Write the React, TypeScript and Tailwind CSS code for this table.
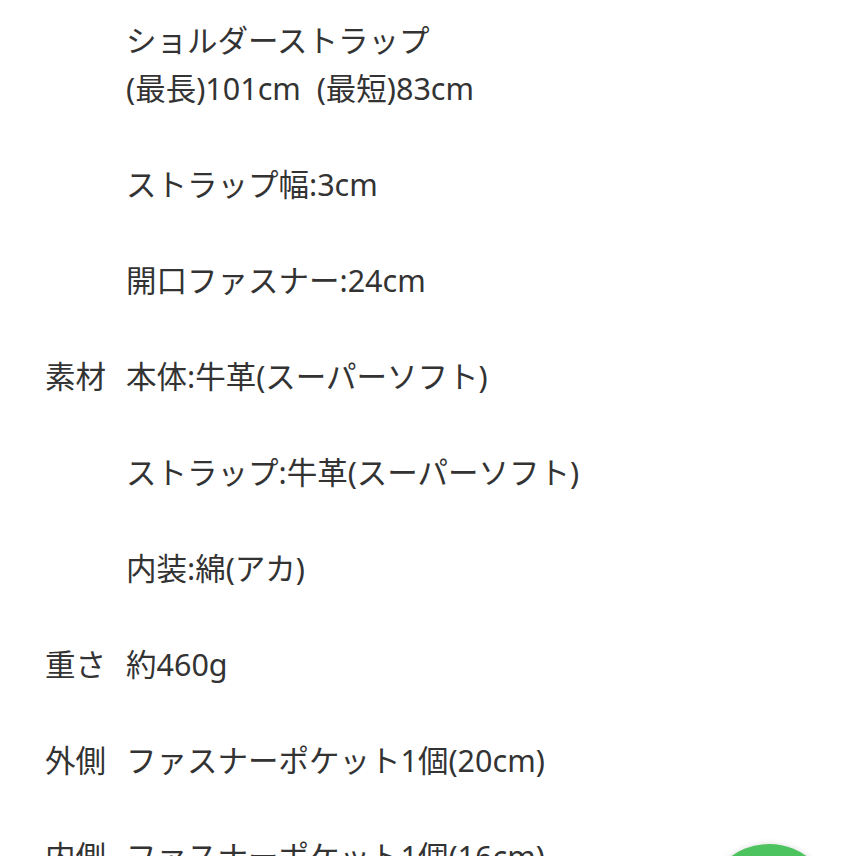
const specs: { label?: string; lines: string[] }[] = [
  { lines: ['ショルダーストラップ', '(最長)101cm\u00a0 (最短)83cm'] },
  { lines: ['ストラップ幅:3cm'] },
  { lines: ['開口ファスナー:24cm'] },
  { label: '素材', lines: ['本体:牛革(スーパーソフト)'] },
  { lines: ['ストラップ:牛革(スーパーソフト)'] },
  { lines: ['内装:綿(アカ)'] },
  { label: '重さ', lines: ['約460g'] },
  { label: '外側', lines: ['ファスナーポケット1個(20cm)'] },
  { label: '内側', lines: ['ファスナーポケット1個(16cm)'] },
];

export default function App() {
  return (
    <div className="relative h-[856px] w-[856px] overflow-hidden bg-white">
      <div
        className="flex flex-col gap-[48px] pl-[45px] pt-[16px] text-[30.5px] leading-[48px] text-[#333333]"
        style={{ fontFamily: '"Noto Sans", "Noto Sans CJK JP", sans-serif' }}
      >
        {specs.map((s, i) => (
          <div key={i} className="flex">
            <div className="w-[81px] shrink-0">{s.label}</div>
            <div className="flex flex-col whitespace-nowrap">
              {s.lines.map((l, j) => (
                <span key={j}>{l}</span>
              ))}
            </div>
          </div>
        ))}
      </div>

      {/* floating chat button */}
      <div className="absolute left-[705px] top-[844px] h-[128px] w-[128px] rounded-full bg-[#4cc35e] shadow-[0_0_6px_rgba(0,0,0,0.15)]"></div>
    </div>
  );
}
